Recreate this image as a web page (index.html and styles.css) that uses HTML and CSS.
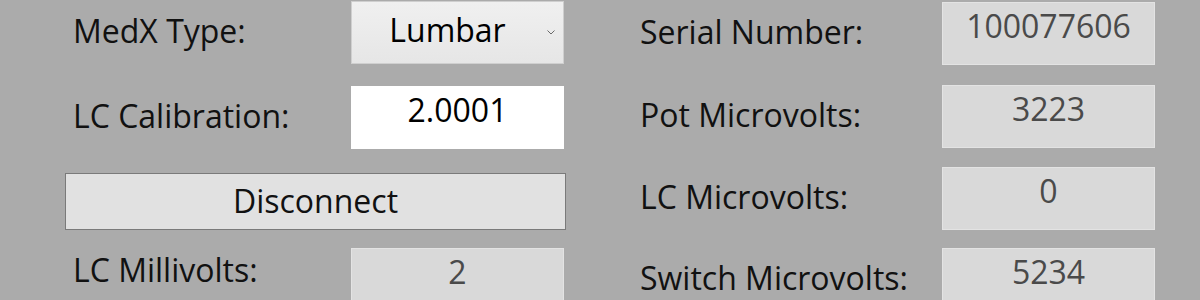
FILE: index.html
```html
<!DOCTYPE html>
<html lang="en">
<head>
  <meta charset="UTF-8">
  <title>MedX Settings</title>
  <link rel="stylesheet" href="styles.css">
</head>
<body>
  <div class="panel">
    <!-- left column -->
    <div class="col col-left">
      <div class="row r1">
        <span class="lbl">MedX Type:</span>
        <div class="combo">
          <span>Lumbar</span>
          <svg class="chev" width="8" height="5" viewBox="0 0 8 5"><polyline points="0.5,0.5 4,4 7.5,0.5" fill="none" stroke="#6a6a6a" stroke-width="1"/></svg>
        </div>
      </div>
      <div class="row r2">
        <span class="lbl">LC Calibration:</span>
        <div class="box edit">2.0001</div>
      </div>
      <button class="btn" type="button">Disconnect</button>
      <div class="row r4">
        <span class="lbl">LC Millivolts:</span>
        <div class="box">2</div>
      </div>
    </div>

    <!-- right column -->
    <div class="col col-right">
      <div class="row r1">
        <span class="lbl">Serial Number:</span>
        <div class="box">100077606</div>
      </div>
      <div class="row r2">
        <span class="lbl">Pot Microvolts:</span>
        <div class="box">3223</div>
      </div>
      <div class="row r3">
        <span class="lbl">LC Microvolts:</span>
        <div class="box">0</div>
      </div>
      <div class="row r4">
        <span class="lbl">Switch Microvolts:</span>
        <div class="box">5234</div>
      </div>
    </div>
  </div>
</body>
</html>
```

FILE: styles.css
```css
body {
  margin: 0;
  background: #ababab;
  font-family: "Open Sans", "Noto Sans", sans-serif;
  font-size: 32px;
  color: #111;
  overflow: hidden;
}
.panel {
  display: flex;
  height: 300px;
}
.col {
  display: flex;
  flex-direction: column;
}
.col-left {
  width: 575px;
  padding-left: 65px;
  padding-top: 1px;
  box-sizing: border-box;
}
.col-right {
  padding-left: 65px;
  padding-top: 2px;
}
.row {
  display: flex;
  align-items: flex-start;
  flex-shrink: 0;
  height: 63px;
}
.lbl {
  width: 286px;
  padding-left: 8px;
  padding-top: 8px;
  box-sizing: border-box;
  white-space: nowrap;
}
.col-right .lbl {
  width: 302px;
  padding-left: 0;
}
.col-left .r4 .lbl {
  padding-top: 0;
}
.box, .combo {
  width: 213px;
  height: 63px;
  flex-shrink: 0;
  box-sizing: border-box;
  text-align: center;
}
.box {
  background: #d9d9d9;
  border: 1px solid #e3e3e3;
  color: #4a4a4a;
  padding-top: 1px;
}
.box.edit {
  background: #fff;
  border-color: #fff;
  color: #000;
}
.combo {
  position: relative;
  background: linear-gradient(#f0f0f0, #e6e6e6);
  border: 1px solid #cfcfcf;
  color: #000;
  padding-top: 6px;
  padding-right: 20px;
}
.chev {
  position: absolute;
  right: 8px;
  top: 28px;
}
.col-left .r2 { margin-top: 22px; }
.btn {
  flex-shrink: 0;
  margin-top: 24px;
  width: 501px;
  height: 57px;
  background: #e1e1e1;
  border: 1px solid #7a7a7a;
  font: inherit;
  color: #111;
  padding: 0 0 2px;
}
.col-left .r4 { margin-top: 18px; }
.col-right .r2 { margin-top: 20px; }
.col-right .r3 { margin-top: 19px; }
.col-right .r4 { margin-top: 18px; }
```
